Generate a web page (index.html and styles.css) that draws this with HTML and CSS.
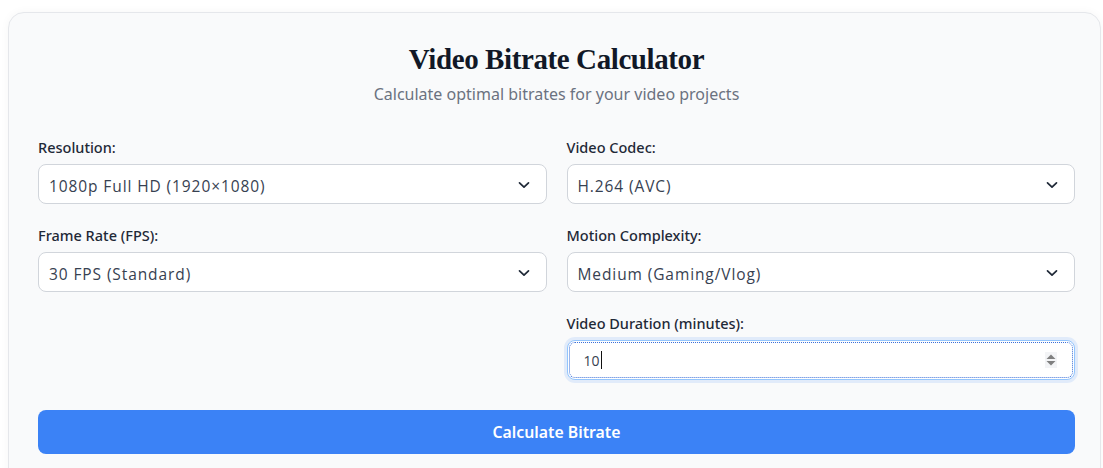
FILE: index.html
```html
<!DOCTYPE html>
<html lang="en">
<head>
<meta charset="utf-8">
<title>Video Bitrate Calculator</title>
<link rel="stylesheet" href="styles.css">
</head>
<body>
<main class="card">
  <h1 class="title">Video Bitrate Calculator</h1>
  <p class="subtitle">Calculate optimal bitrates for your video projects</p>
  <div class="grid">
    <div class="field">
      <label class="label">Resolution:</label>
      <div class="select"><span class="value">1080p Full HD (1920×1080)</span>
        <svg class="chev" width="12" height="8" viewBox="0 0 12 8"><path d="M1.5 1.8 L6 6.2 L10.5 1.8" fill="none" stroke="#1f2937" stroke-width="1.7" stroke-linecap="round" stroke-linejoin="round"/></svg></div>
    </div>
    <div class="field">
      <label class="label">Video Codec:</label>
      <div class="select"><span class="value">H.264 (AVC)</span>
        <svg class="chev" width="12" height="8" viewBox="0 0 12 8"><path d="M1.5 1.8 L6 6.2 L10.5 1.8" fill="none" stroke="#1f2937" stroke-width="1.7" stroke-linecap="round" stroke-linejoin="round"/></svg></div>
    </div>
    <div class="field">
      <label class="label">Frame Rate (FPS):</label>
      <div class="select"><span class="value">30 FPS (Standard)</span>
        <svg class="chev" width="12" height="8" viewBox="0 0 12 8"><path d="M1.5 1.8 L6 6.2 L10.5 1.8" fill="none" stroke="#1f2937" stroke-width="1.7" stroke-linecap="round" stroke-linejoin="round"/></svg></div>
    </div>
    <div class="field">
      <label class="label">Motion Complexity:</label>
      <div class="select"><span class="value">Medium (Gaming/Vlog)</span>
        <svg class="chev" width="12" height="8" viewBox="0 0 12 8"><path d="M1.5 1.8 L6 6.2 L10.5 1.8" fill="none" stroke="#1f2937" stroke-width="1.7" stroke-linecap="round" stroke-linejoin="round"/></svg></div>
    </div>
    <div class="field empty"></div>
    <div class="field">
      <label class="label">Video Duration (minutes):</label>
      <div class="input focused"><span class="num">10</span><span class="caret"></span>
        <svg class="spin" width="12" height="16" viewBox="0 0 12 16"><rect x="0" y="0" width="12" height="16" fill="#f3f4f6"/><path d="M1.5 7 L6 2.5 L10.5 7 Z" fill="#808080"/><path d="M1.5 9 L6 13.5 L10.5 9 Z" fill="#808080"/></svg></div>
    </div>
  </div>
  <button class="btn">Calculate Bitrate</button>
</main>
</body>
</html>
```

FILE: styles.css
```css
html, body { margin: 0; padding: 0; }
html { overflow: hidden; }
body {
  background: #ffffff;
  padding: 12px 2px 0 8px;
  font-family: "Noto Sans", "Open Sans", sans-serif;
  overflow: hidden;
  height: 468px;
  box-sizing: border-box;
}
.card {
  background: #f9fafb;
  border: 1px solid #e5e7eb;
  border-radius: 16px;
  padding: 26px 25px 40px 29px;
  box-shadow: 0 0 10px rgba(0,0,0,0.04);
}
.title {
  margin: 0;
  text-align: center;
  font-family: "Liberation Serif", "DejaVu Serif", serif;
  font-weight: 700;
  font-size: 29px;
  letter-spacing: -0.4px;
  line-height: 40px;
  color: #111827;
}
.subtitle {
  margin: 4px 0 0;
  text-align: center;
  font-size: 16px;
  line-height: 22px;
  color: #6b7280;
}
.grid {
  margin-top: 32px;
  display: grid;
  grid-template-columns: 1fr 1fr;
  column-gap: 20px;
  row-gap: 21px;
}
.label {
  display: block;
  font-size: 14.5px;
  font-weight: 500;
  line-height: 20px;
  color: #1f2937;
  margin-bottom: 7px;
}
.select, .input {
  height: 40px;
  box-sizing: border-box;
  background: #ffffff;
  border: 1px solid #d1d5db;
  border-radius: 8px;
  display: flex;
  align-items: center;
  padding: 0 16px 0 10px;
}
.value {
  flex: 1;
  font-size: 15.5px;
  letter-spacing: 0.9px;
  color: #374151;
  font-family: "Open Sans", "Noto Sans", sans-serif;
  padding-top: 3px;
}
.chev { flex: none; margin-top: 1px; }
.input.focused {
  border-color: #93c5fd;
  outline: 1px dotted #3b6fd8;
  outline-offset: -3px;
  box-shadow: 0 0 0 3px rgba(59,130,246,0.12);
  padding-left: 16px;
  padding-right: 17px;
}
.num {
  font-size: 14px;
  color: #374151;
  font-family: "Open Sans", "Noto Sans", sans-serif;
}
.caret {
  width: 1px;
  height: 18px;
  background: #111;
  margin-left: 1px;
}
.spin { margin-left: auto; flex: none; }
.btn {
  display: block;
  width: 100%;
  margin-top: 30px;
  height: 44px;
  border: none;
  border-radius: 8px;
  background: #3b82f6;
  color: #ffffff;
  font-family: "Noto Sans", "Open Sans", sans-serif;
  font-size: 15.8px;
  font-weight: 600;
}
```
